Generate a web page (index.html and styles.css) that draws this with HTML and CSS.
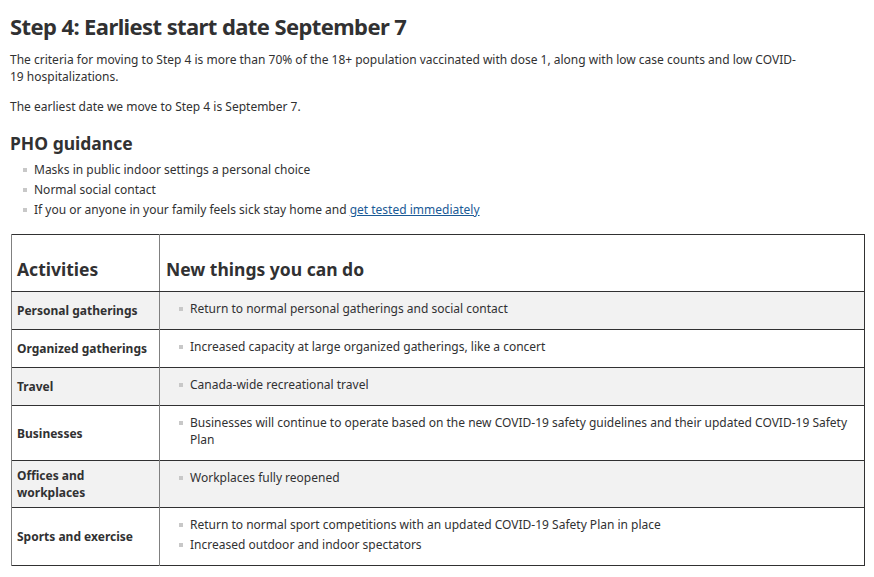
FILE: index.html
```html
<!DOCTYPE html>
<html lang="en">
<head>
<meta charset="utf-8">
<title>Step 4</title>
<link rel="stylesheet" href="styles.css">
</head>
<body>
<main class="content">
  <h2 class="title">Step 4: Earliest start date September 7</h2>
  <p class="para">The criteria for moving to Step 4 is more than 70% of the 18+ population vaccinated with dose 1, along with low case counts and low COVID-19 hospitalizations.</p>
  <p class="para">The earliest date we move to Step 4 is September 7.</p>
  <h3 class="subtitle">PHO guidance</h3>
  <ul class="list">
    <li>Masks in public indoor settings a personal choice</li>
    <li>Normal social contact</li>
    <li>If you or anyone in your family feels sick stay home and <a href="#" class="link">get tested immediately</a></li>
  </ul>
  <table class="steps">
    <thead>
      <tr><th class="col-a">Activities</th><th class="col-b">New things you can do</th></tr>
    </thead>
    <tbody>
      <tr class="shade"><td class="label">Personal gatherings</td><td><ul class="list cell"><li>Return to normal personal gatherings and social contact</li></ul></td></tr>
      <tr><td class="label">Organized gatherings</td><td><ul class="list cell"><li>Increased capacity at large organized gatherings, like a concert</li></ul></td></tr>
      <tr class="shade"><td class="label">Travel</td><td><ul class="list cell"><li>Canada-wide recreational travel</li></ul></td></tr>
      <tr><td class="label">Businesses</td><td><ul class="list cell"><li>Businesses will continue to operate based on the new COVID-19 safety guidelines and their updated COVID-19 Safety Plan</li></ul></td></tr>
      <tr class="shade"><td class="label">Offices and workplaces</td><td><ul class="list cell"><li>Workplaces fully reopened</li></ul></td></tr>
      <tr><td class="label">Sports and exercise</td><td><ul class="list cell"><li>Return to normal sport competitions with an updated COVID-19 Safety Plan in place</li><li>Increased outdoor and indoor spectators</li></ul></td></tr>
    </tbody>
  </table>
</main>
</body>
</html>
```

FILE: styles.css
```css
html, body {
  margin: 0;
  padding: 0;
  background: #fff;
}
body {
  font-family: "Noto Sans", "Open Sans", sans-serif;
  color: #313132;
  font-size: 12px;
  line-height: 17px;
}
.content {
  padding: 10px 9px 0 10px;
}
.title {
  font-size: 22px;
  letter-spacing: -0.6px;
  line-height: 32px;
  font-weight: 700;
  margin: 0 0 9px 0;
}
.para {
  margin: 0 0 13px 0;
  max-width: 795px;
}
.subtitle {
  font-size: 17.5px;
  line-height: 24px;
  font-weight: 700;
  margin: 16px 0 6px 0;
}
.list {
  list-style: none;
  margin: 0 0 16px 0;
  padding: 0 0 0 24px;
}
.list li {
  position: relative;
  line-height: 17px;
  margin-bottom: 3px;
}
.list li::before {
  content: "";
  position: absolute;
  left: -11px;
  top: 7px;
  width: 4px;
  height: 4px;
  background: #c8c8c8;
}
.link {
  color: #1a5a96;
  text-decoration: underline;
}
.steps {
  width: 854px;
  border-collapse: collapse;
  border: 1px solid #313132;
  margin-left: 1px;
}
.steps th {
  text-align: left;
  vertical-align: bottom;
  font-size: 17.5px;
  line-height: 24px;
  font-weight: 700;
  padding: 22px 6px 10px 6px;
  border-bottom: 1px solid #313132;
  border-left: 1px solid #808080;
}
.steps th.col-a {
  padding-left: 5px;
}
.steps td {
  vertical-align: top;
  padding: 8px 6px 9px 6px;
  border-top: 1px solid #313132;
  border-left: 1px solid #808080;
}
.steps td.label {
  vertical-align: middle;
  font-weight: 700;
  font-size: 12px;
  padding: 6px 6px 6px 5px;
}
.col-a {
  width: 136px;
}
.steps tr.shade td {
  background: #f2f2f2;
}
.list.cell {
  margin: 0;
  padding-left: 24px;
}
```
